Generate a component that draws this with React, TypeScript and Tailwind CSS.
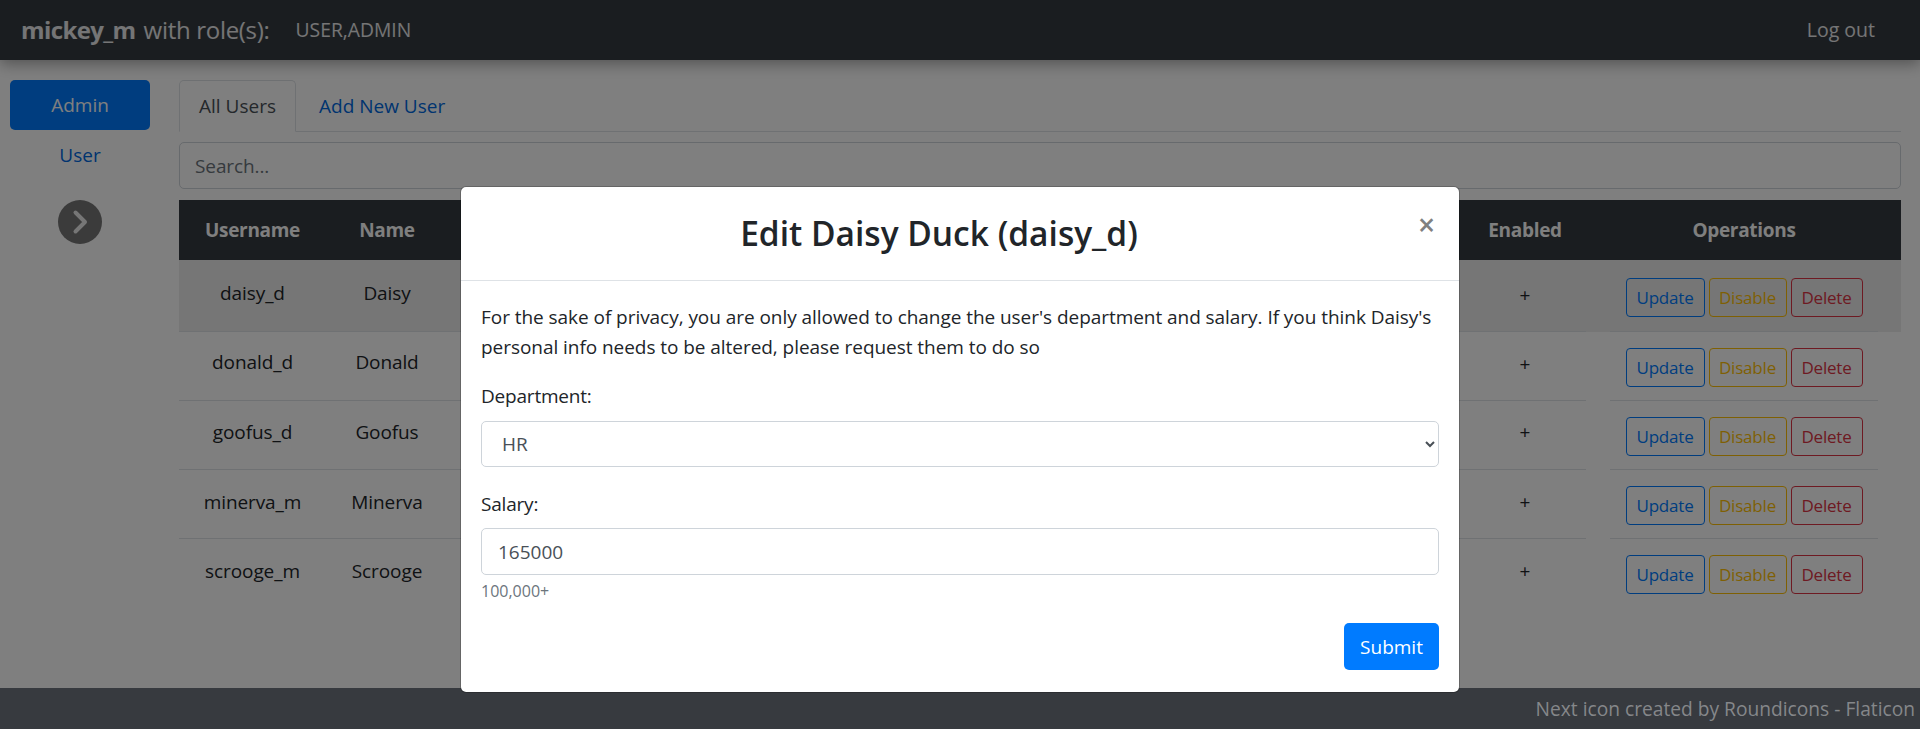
import React from "react";

const users = [
  { u: "daisy_d", n: "Daisy", row: "h-[72px] bg-black/[0.075]", text: "pt-[18px]", plus: "pt-[20px]", btn: "pt-[18px]", line: "border-b border-[#dee2e6]" },
  { u: "donald_d", n: "Donald", row: "h-[69px]", text: "pt-[15px]", plus: "pt-[17px]", btn: "pt-[16px]", line: "border-b border-[#dee2e6]" },
  { u: "goofus_d", n: "Goofus", row: "h-[69px]", text: "pt-[16px]", plus: "pt-[16px]", btn: "pt-[16px]", line: "border-b border-[#dee2e6]" },
  { u: "minerva_m", n: "Minerva", row: "h-[69px]", text: "pt-[17px]", plus: "pt-[17px]", btn: "pt-[16px]", line: "border-b border-[#dee2e6]" },
  { u: "scrooge_m", n: "Scrooge", row: "h-[69px]", text: "pt-[17px]", plus: "pt-[17px]", btn: "pt-[16px]", line: "" },
];

function Chevron() {
  return (
    <svg viewBox="0 0 44 44" className="w-[44px] h-[44px]">
      <circle cx="22" cy="22" r="22" fill="#767676" />
      <path d="M17.5 12.5 L27 22 L17.5 31.5" fill="none" stroke="#ececec" strokeWidth="4" strokeLinecap="round" strokeLinejoin="round" />
    </svg>
  );
}

export default function App() {
  return (
    <div className="relative h-[729px] w-[1920px] overflow-hidden flex flex-col bg-white text-[#212529] text-[19px] leading-[30px] font-['Open_Sans','Noto_Sans',sans-serif]">
      <header className="h-[60px] shrink-0 bg-[#343a40] flex items-center pl-[21px] pr-[45px] text-white/90 shadow-[0_4px_14px_rgba(0,0,0,0.35)] relative">
        <span className="text-[24px] leading-[30px] font-bold tracking-[-0.6px]">mickey_m</span>
        <span className="text-[24px] leading-[30px] ml-[8px] tracking-[-0.3px]">with role(s):</span>
        <span className="ml-[26px] text-[19.3px]">USER,ADMIN</span>
        <span className="ml-auto text-[19.5px]">Log out</span>
      </header>

      <main className="flex-1 flex min-h-0">
        <aside className="w-[179px] shrink-0 pt-[20px] pl-[10px] flex flex-col items-start">
          <div className="w-[140px] h-[50px] rounded-[5px] bg-[#007bff] text-white flex items-center justify-center">Admin</div>
          <div className="w-[140px] h-[50px] flex items-center justify-center text-[#0069e0]">User</div>
          <div className="w-[140px] flex justify-center mt-[20px]"><Chevron /></div>
        </aside>

        <section className="w-[1722px] shrink-0 pt-[20px]">
          <div className="h-[52px] border-b border-[#dee2e6] flex items-stretch">
            <div className="w-[117px] h-[52px] bg-white border border-[#dee2e6] border-b-white rounded-t-[5px] flex items-center justify-center text-[#495057]">All Users</div>
            <div className="ml-[23px] h-[51px] flex items-center text-[#0069e0]">Add New User</div>
          </div>
          <div className="mt-[10px] h-[47px] border border-[#ced4da] rounded-[5px] flex items-center px-[15px] text-[#6c757d] tracking-[-0.1px]">Search...</div>

          <div className="mt-[11px] h-[60px] bg-[#343a40] text-white font-bold flex items-center text-[19px] tracking-[-0.3px]">
            <div className="w-[147px] text-center">Username</div>
            <div className="w-[122px] text-center">Name</div>
            <div className="flex-1" />
            <div className="w-[122px] text-center">Enabled</div>
            <div className="w-[24px]" />
            <div className="w-[268px] text-center">Operations</div>
            <div className="w-[23px]" />
          </div>

          {users.map((r) => (
            <div key={r.u} className={`flex items-stretch ${r.row}`}>
              <div className={`flex-1 flex ${r.line}`}>
                <div className={`w-[147px] text-center tracking-[-0.1px] ${r.text}`}>{r.u}</div>
                <div className={`w-[122px] text-center tracking-[-0.1px] ${r.text}`}>{r.n}</div>
                <div className="flex-1" />
                <div className={`w-[122px] text-center ${r.plus}`}>+</div>
              </div>
              <div className="w-[24px]" />
              <div className={`w-[268px] flex justify-center gap-[4px] text-[17px] leading-[24px] tracking-[-0.2px] ${r.line} ${r.btn}`}>
                <span className="w-[79px] h-[39px] border border-[#007bff] rounded-[4px] text-[#007bff] flex items-center justify-center">Update</span>
                <span className="w-[78px] h-[39px] border border-[#ffc107] rounded-[4px] text-[#ffc107] flex items-center justify-center">Disable</span>
                <span className="w-[72px] h-[39px] border border-[#dc3545] rounded-[4px] text-[#dc3545] flex items-center justify-center">Delete</span>
              </div>
              <div className="w-[23px]" />
            </div>
          ))}
        </section>
      </main>

      <div className="absolute inset-0 bg-black/50" />

      <footer className="relative h-[41px] shrink-0 bg-[#373a3f] text-[#85878a] flex items-center justify-end pr-[5px] text-[19.2px]">
        Next icon created by Roundicons - Flaticon
      </footer>

      <div className="absolute left-[460px] top-[186px] w-[1000px] h-[507px] bg-white border border-black/20 rounded-[6px] bg-clip-padding flex flex-col">
        <div className="h-[94px] border-b border-[#dee2e6] flex items-start relative">
          <h1 className="w-full pr-[42px] pt-[25px] text-center text-[33.5px] leading-[42px] font-semibold">Edit Daisy Duck (daisy_d)</h1>
          <span className="absolute left-[957px] top-[17px] text-[30px] leading-[42px] font-semibold text-[#808080]">×</span>
        </div>
        <div className="flex-1 px-[20px] pt-[21px]">
          <p className="tracking-[-0.05px]">For the sake of privacy, you are only allowed to change the user's department and salary. If you think Daisy's personal info needs to be altered, please request them to do so</p>
          <label className="block mt-[19px] tracking-[-0.2px]">Department:</label>
          <select defaultValue="HR" className="block mt-[10px] w-full h-[46px] bg-white border border-[#ced4da] rounded-[5px] pl-[16px] pr-[4px] text-[#495057]">
            <option>HR</option>
          </select>
          <label className="block mt-[22px] tracking-[-0.2px]">Salary:</label>
          <div className="mt-[9px] h-[47px] border border-[#ced4da] rounded-[5px] flex items-center px-[16px] text-[#495057]">165000</div>
          <div className="mt-[6px] text-[16px] leading-[20px] text-[#6c757d]">100,000+</div>
          <div className="flex justify-end mt-[22px]">
            <span className="w-[95px] h-[47px] rounded-[5px] bg-[#007bff] text-white flex items-center justify-center">Submit</span>
          </div>
        </div>
      </div>
    </div>
  );
}
